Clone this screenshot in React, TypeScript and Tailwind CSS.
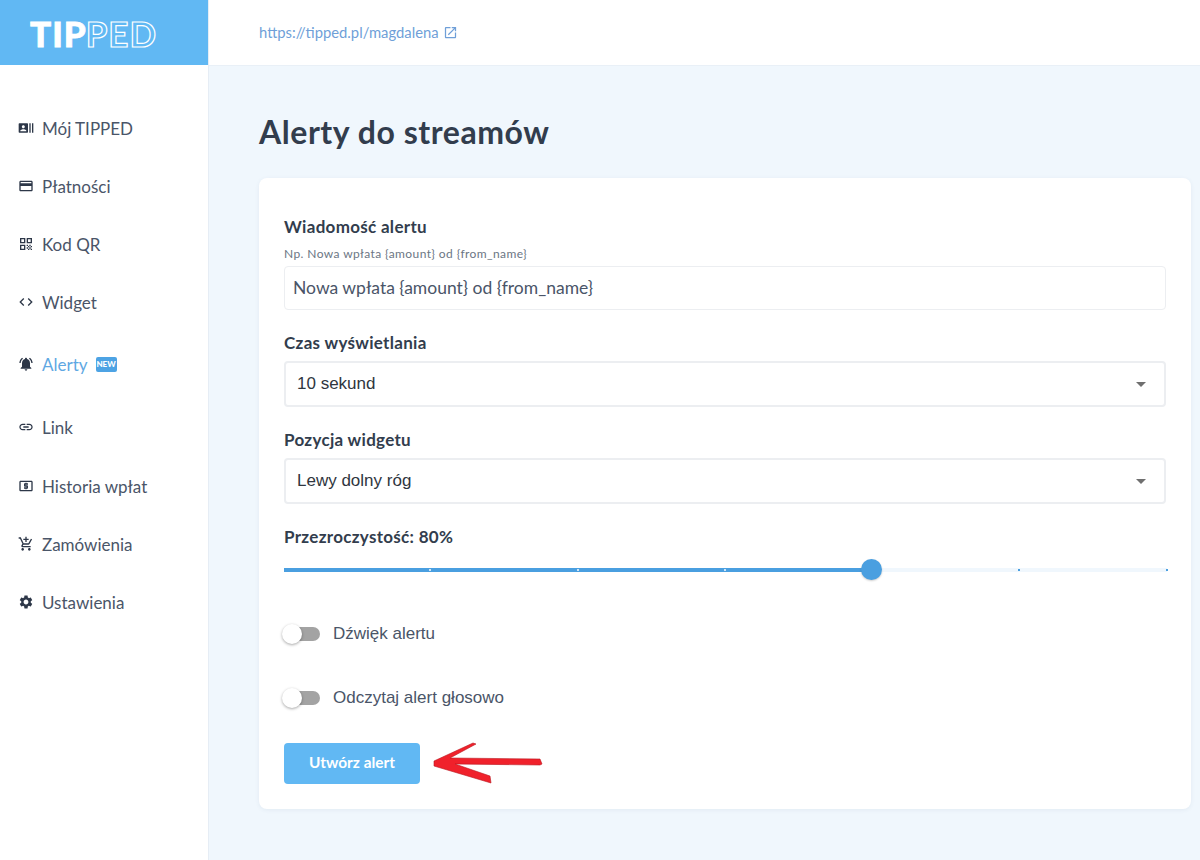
const ICONS = {
  actors:
    "M21 5v14h2V5h-2zm-4 14h2V5h-2v14zM14 5H2c-.55 0-1 .45-1 1v12c0 .55.45 1 1 1h12c.55 0 1-.45 1-1V6c0-.55-.45-1-1-1zM8 7.75c1.24 0 2.25 1.01 2.25 2.25S9.24 12.25 8 12.25 5.75 11.24 5.75 10 6.76 7.75 8 7.75zM12.5 17h-9v-.75c0-1.5 3-2.25 4.5-2.25s4.5.75 4.5 2.25V17z",
  card: "M20 4H4c-1.11 0-1.99.89-1.99 2L2 18c0 1.11.89 2 2 2h16c1.11 0 2-.89 2-2V6c0-1.11-.89-2-2-2zm0 14H4v-6h16v6zm0-10H4V6h16v2z",
  qr: "M3 11h8V3H3v8zm2-6h4v4H5V5zM3 21h8v-8H3v8zm2-6h4v4H5v-4zM13 3v8h8V3h-8zm6 6h-4V5h4v4zM19 19h2v2h-2zM13 13h2v2h-2zM15 15h2v2h-2zM13 17h2v2h-2zM15 19h2v2h-2zM17 17h2v2h-2zM17 13h2v2h-2zM19 15h2v2h-2z",
  code: "M9.4 16.6 4.8 12l4.6-4.6L8 6l-6 6 6 6 1.4-1.4zm5.2 0 4.6-4.6-4.6-4.6L16 6l6 6-6 6-1.4-1.4z",
  bell: "M7.58 4.08 6.15 2.65C3.75 4.48 2.17 7.3 2.03 10.5h2c.15-2.65 1.51-4.97 3.55-6.42zM19.97 10.5h2c-.15-3.2-1.73-6.02-4.12-7.85l-1.42 1.43c2.02 1.45 3.39 3.77 3.54 6.42zM18 11c0-3.07-1.64-5.64-4.5-6.32V4c0-.83-.67-1.5-1.5-1.5s-1.5.67-1.5 1.5v.68C7.63 5.36 6 7.92 6 11v5l-2 2v1h16v-1l-2-2v-5zm-6 11c.14 0 .27-.01.4-.04.65-.14 1.18-.58 1.44-1.18.1-.24.15-.5.15-.78h-4c.01 1.1.9 2 2.01 2z",
  link: "M3.9 12c0-1.71 1.39-3.1 3.1-3.1h4V7H7c-2.76 0-5 2.24-5 5s2.24 5 5 5h4v-1.9H7c-1.71 0-3.1-1.39-3.1-3.1zM8 13h8v-2H8v2zm9-6h-4v1.9h4c1.71 0 3.1 1.39 3.1 3.1s-1.39 3.1-3.1 3.1h-4V17h4c2.76 0 5-2.24 5-5s-2.24-5-5-5z",
  atm: "M11 17h2v-1h1c.55 0 1-.45 1-1v-3c0-.55-.45-1-1-1h-3v-1h4V8h-2V7h-2v1h-1c-.55 0-1 .45-1 1v3c0 .55.45 1 1 1h3v1H9v2h2v1zm9-13H4c-1.11 0-1.99.89-1.99 2L2 18c0 1.11.89 2 2 2h16c1.11 0 2-.89 2-2V6c0-1.11-.89-2-2-2zm0 14H4V6h16v12z",
  cart: "M11 9h2V6h3V4h-3V1h-2v3H8v2h3v3zm-4 9c-1.1 0-1.99.9-1.99 2S5.9 22 7 22s2-.9 2-2-.9-2-2-2zm10 0c-1.1 0-1.99.9-1.99 2s.89 2 1.99 2 2-.9 2-2-.9-2-2-2zm-9.83-3.25.03-.12.9-1.63h7.45c.75 0 1.41-.41 1.75-1.03l3.86-7.01L19.42 4h-.01l-1.1 2-2.76 5H8.53l-.13-.27L6.16 6l-.95-2-.94-2H1v2h2l3.6 7.59-1.35 2.45c-.16.28-.25.61-.25.96 0 1.1.9 2 2 2h12v-2H7.42c-.13 0-.25-.11-.25-.25z",
  gear: "M19.14 12.94c.04-.3.06-.61.06-.94 0-.32-.02-.64-.07-.94l2.03-1.58c.18-.14.23-.41.12-.61l-1.92-3.32c-.12-.22-.37-.29-.59-.22l-2.39.96c-.5-.38-1.03-.7-1.62-.94l-.36-2.54c-.04-.24-.24-.41-.48-.41h-3.84c-.24 0-.43.17-.47.41l-.36 2.54c-.59.24-1.13.57-1.62.94l-2.39-.96c-.22-.08-.47 0-.59.22L2.74 8.87c-.12.21-.08.47.12.61l2.03 1.58c-.05.3-.09.63-.09.94s.02.64.07.94l-2.03 1.58c-.18.14-.23.41-.12.61l1.92 3.32c.12.22.37.29.59.22l2.39-.96c.5.38 1.03.7 1.62.94l.36 2.54c.05.24.24.41.48.41h3.84c.24 0 .44-.17.47-.41l.36-2.54c.59-.24 1.13-.56 1.62-.94l2.39.96c.22.08.47 0 .59-.22l1.92-3.32c.12-.22.07-.47-.12-.61l-2.01-1.58zM12 15.6c-1.98 0-3.6-1.62-3.6-3.6s1.62-3.6 3.6-3.6 3.6 1.62 3.6 3.6-1.62 3.6-3.6 3.6z",
  external:
    "M19 19H5V5h7V3H5c-1.11 0-2 .9-2 2v14c0 1.1.89 2 2 2h14c1.1 0 2-.9 2-2v-7h-2v7zM14 3v2h3.59l-9.83 9.83 1.41 1.41L19 6.41V10h2V3h-7z",
};

function Icon({ d, className }: { d: string; className?: string }) {
  return (
    <svg viewBox="0 0 24 24" fill="currentColor" className={className}>
      <path d={d} />
    </svg>
  );
}

function NavItem({
  icon,
  label,
  active,
  badge,
  height,
}: {
  icon: string;
  label: string;
  active?: boolean;
  badge?: boolean;
  height: string;
}) {
  return (
    <div className={`flex items-center pl-[18px] ${height}`}>
      <Icon d={icon} className="h-4 w-4 shrink-0 text-[#2d3748]" />
      <span
        className={`mt-[1px] ml-2 text-[17px] ${active ? "text-[#5fa8e3]" : "text-[#4a5568]"}`}
      >
        {label}
      </span>
      {badge && (
        <span className="ml-[8px] flex h-[15px] w-[21px] items-center justify-center rounded-[2px] bg-[#4da3e4] text-[8px] font-black text-white">
          NEW
        </span>
      )}
    </div>
  );
}

function Select({ value }: { value: string }) {
  return (
    <div className="flex h-[46px] items-center justify-between rounded border-2 border-[#eceef1] bg-white pr-[18px] pl-[11px] font-['Liberation_Sans',sans-serif] text-[17px] text-[#2f3640]">
      <span>{value}</span>
      <span className="h-0 w-0 border-x-[5px] border-t-[5px] border-x-transparent border-t-[#6f6f6f]" />
    </div>
  );
}

function Toggle({ label }: { label: string }) {
  return (
    <div className="flex h-6 items-center">
      <div className="relative h-[14px] w-[36px] rounded-full bg-[#a3a3a3]">
        <div className="absolute top-[-3px] left-[-2px] h-5 w-5 rounded-full bg-white shadow-[0_1px_3px_rgba(0,0,0,0.35)]" />
      </div>
      <span className="ml-[13px] font-['Liberation_Sans',sans-serif] text-[17px] text-[#4a5568]">
        {label}
      </span>
    </div>
  );
}

const TICKS = [430, 578, 725, 1019, 1167];

export default function App() {
  return (
    <div className="flex h-[860px] w-[1200px] overflow-hidden bg-[#f0f7fd] font-['Lato','Open_Sans',sans-serif]">
      {/* Sidebar */}
      <aside className="flex w-[209px] shrink-0 flex-col border-r border-[#e6edf5] bg-white">
        <div className="flex h-[65px] items-center bg-[#61b8f3] pt-[2px] pl-[30px] text-[35px] leading-none font-black tracking-[1px] text-white">
          <span className="[-webkit-text-stroke:0.8px_white]">TIP</span>
          <span className="-ml-[1px] font-bold text-transparent [-webkit-text-stroke:1.2px_white]">
            PED
          </span>
        </div>
        <nav className="mt-[34px] flex flex-col">
          <NavItem icon={ICONS.actors} label="Mój TIPPED" height="h-[58px]" />
          <NavItem icon={ICONS.card} label="Płatności" height="h-[58px]" />
          <NavItem icon={ICONS.qr} label="Kod QR" height="h-[58px]" />
          <NavItem icon={ICONS.code} label="Widget" height="h-[58px]" />
          <NavItem icon={ICONS.bell} label="Alerty" active badge height="h-[66px]" />
          <NavItem icon={ICONS.link} label="Link" height="h-[60px]" />
          <NavItem icon={ICONS.atm} label="Historia wpłat" height="h-[58px]" />
          <NavItem icon={ICONS.cart} label="Zamówienia" height="h-[58px]" />
          <NavItem icon={ICONS.gear} label="Ustawienia" height="h-[58px]" />
        </nav>
      </aside>

      {/* Main */}
      <div className="flex min-w-0 flex-1 flex-col">
        <header className="flex h-[66px] shrink-0 items-center border-b border-[#e9f0f7] bg-white pl-[50px] text-[14.8px] text-[#6f9fd8]">
          <span>https://tipped.pl/magdalena</span>
          <Icon d={ICONS.external} className="ml-[4px] h-[15px] w-[15px]" />
        </header>

        <main className="pt-[43px] pr-[9px] pl-[50px]">
          <h1 className="text-[32px] leading-[46px] font-bold tracking-[0.55px] text-[#323d4d]">
            Alerty do streamów
          </h1>
          <section className="mt-[23px] h-[631px] rounded-lg bg-white px-[25px] pt-[38px] shadow-[0_1px_4px_rgba(60,90,130,0.08)]">
            <label className="block text-[17px] leading-[22px] font-bold tracking-[0.3px] text-[#323d4d]">
              Wiadomość alertu
            </label>
            <p className="mt-[9px] text-[12px] leading-[14px] tracking-[0.4px] text-[#6b7684]">
              Np. Nowa wpłata {"{amount}"} od {"{from_name}"}
            </p>
            <div className="mt-[5px] flex h-[44px] items-center rounded border border-[#eceef1] pl-[8px] text-[17.5px] text-[#4a5568]">
              Nowa wpłata {"{amount}"} od {"{from_name}"}
            </div>

            <label className="mt-[22px] mb-[7px] block text-[17px] leading-[22px] font-bold tracking-[0.3px] text-[#323d4d]">
              Czas wyświetlania
            </label>
            <Select value="10 sekund" />

            <label className="mt-[22px] mb-[7px] block text-[17px] leading-[22px] font-bold tracking-[0.3px] text-[#323d4d]">
              Pozycja widgetu
            </label>
            <Select value="Lewy dolny róg" />

            <label className="mt-[22px] block text-[17px] leading-[22px] font-bold tracking-[0.3px] text-[#323d4d]">
              Przezroczystość: 80%
            </label>

            {/* Slider */}
            <div className="relative mt-[20px] h-1 w-[883px] bg-[#f0f7fd]">
              <div className="h-1 w-[588px] bg-[#4a9fe0]" />
              {TICKS.map((x) => (
                <span
                  key={x}
                  className={`absolute top-[1px] h-[2px] w-[2px] ${x < 872 ? "bg-[#cfe5f7]" : "bg-[#4a9fe0]"}`}
                  style={{ left: x - 285 }}
                />
              ))}
              <div className="absolute top-[-9px] left-[577px] h-[21px] w-[21px] rounded-full bg-[#4a9fe0] shadow-[0_1px_2px_rgba(0,0,0,0.2)]" />
            </div>

            <div className="mt-[50px] flex flex-col gap-[40px]">
              <Toggle label="Dźwięk alertu" />
              <Toggle label="Odczytaj alert głosowo" />
            </div>

            <div className="mt-[32px] flex items-center">
              <button
                type="button"
                className="h-[41px] w-[136px] rounded bg-[#61b8f3] text-[15.4px] font-bold text-white"
              >
                Utwórz alert
              </button>
              <svg viewBox="0 0 110 42" className="ml-[13px] h-[42px] w-[110px]">
                <polygon
                  points="1,19 40,1 43,2 17,16 107,17 109,22 107,23 22,22 57,34 58,41 1,24"
                  fill="#f0212b"
                  stroke="#b8161f"
                  strokeWidth="0.6"
                />
              </svg>
            </div>
          </section>
        </main>
      </div>
    </div>
  );
}
